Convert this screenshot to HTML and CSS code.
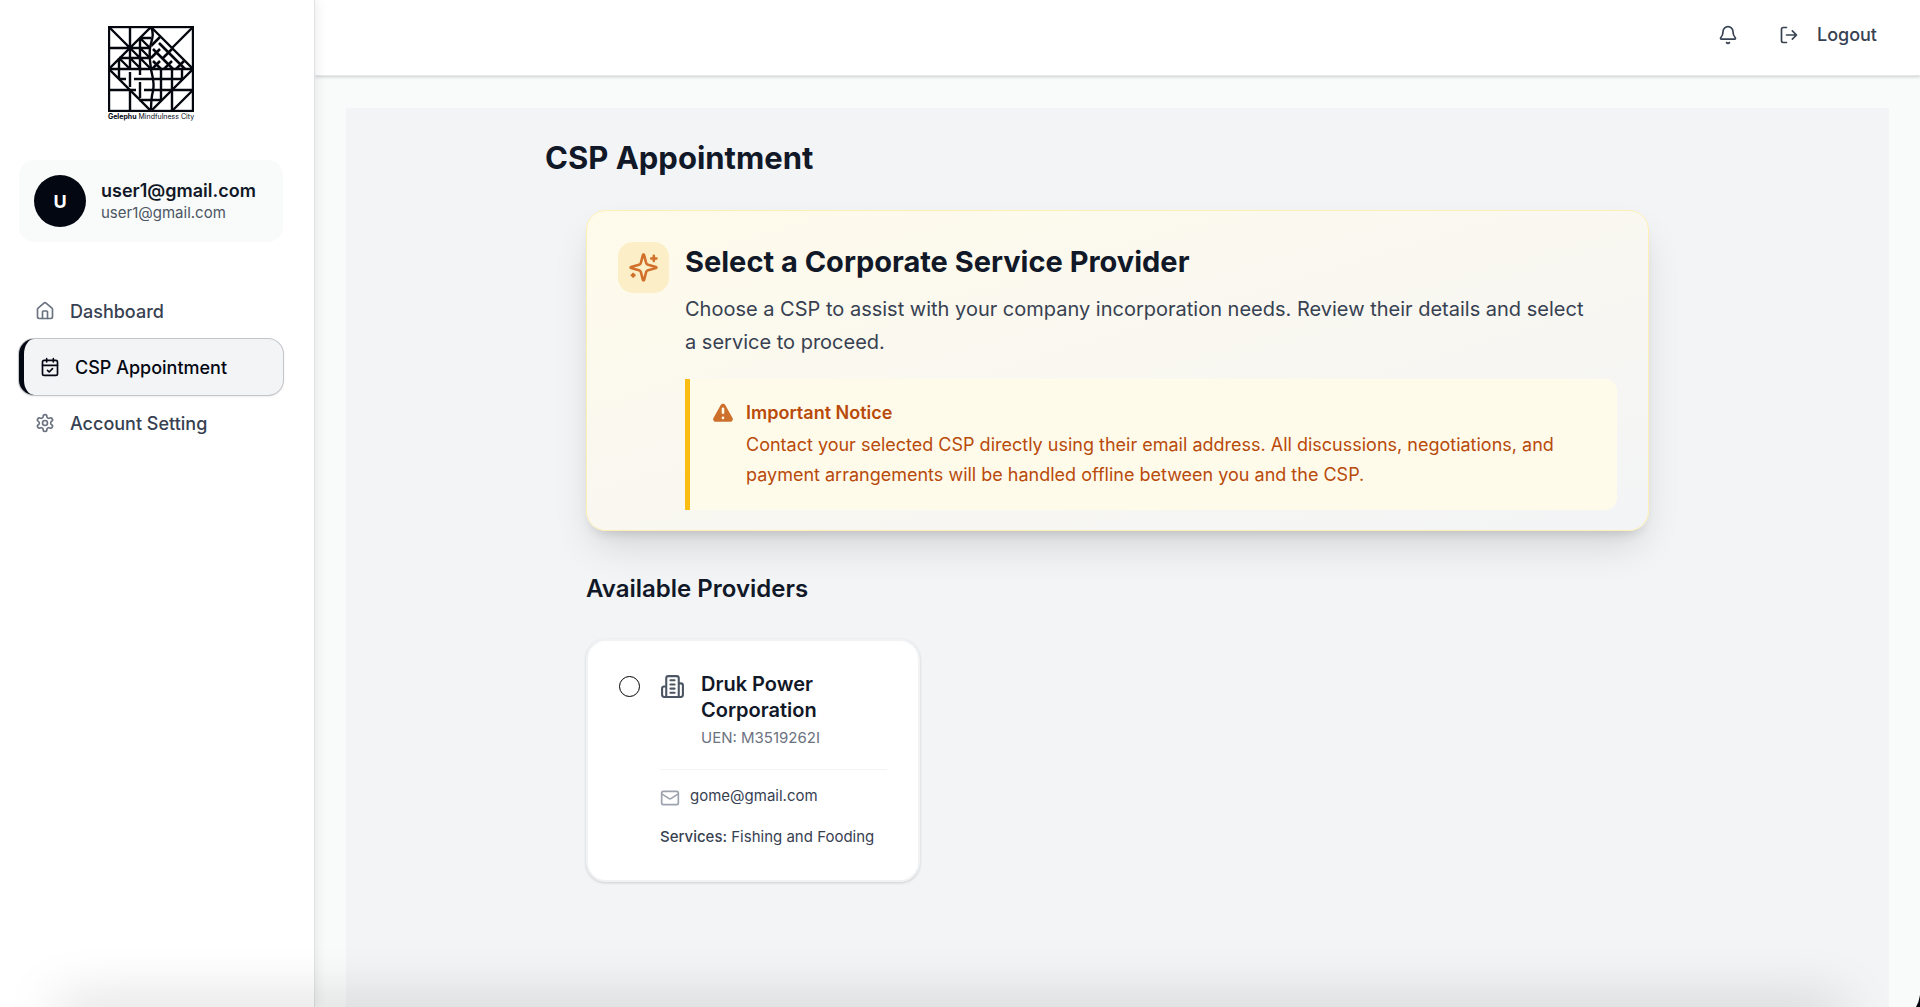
FILE: index.html
```html
<!DOCTYPE html>
<html lang="en">
<head>
  <meta charset="UTF-8" />
  <meta name="viewport" content="width=device-width, initial-scale=1.0">
  <title>CSP Appointment</title>
  <link rel="stylesheet" href="styles.css">
</head>
<body>
  <div class="layout">
    <aside class="sidebar">
      <a href="#" class="logo" aria-label="Gelephu Mindfulness City">
        <svg width="86" height="86" viewBox="0 0 86 86" fill="none" stroke="#05070f" stroke-width="2.4">
          <clipPath id="weave"><path d="M45 4 84 43H43l1-8-3-9 3-8z"/></clipPath>
          <rect x="1" y="1" width="84" height="84"/>
          <path d="M43 1 85 43 43 85 1 43z"/>
          <path d="M1 43h84M22 1v42M22 64v21M1 22h41M1 1l21 21M85 1 64 22M85 64 64 85"/>
          <path d="M22 22l21 21M32 12v31M11 32h32M11 32l11 11M22 32l11 11M32 22l11 11M32 32l11 11M32 12l10 10M32 12h11M11 32v21"/>
          <path d="M1 64h27M36 64h49M11 53h7M26 53h49M22 46v15M32 43v6M32 56v16M53 43v31M64 43v42M74 43v11M31 74h22"/>
          <path d="M43 1c4 8 0 14-1 21-1 8 0 13 1 21 1 7 4 13 2 22-2 7-2 12-2 20"/>
          <g clip-path="url(#weave)" stroke-width="2.6">
            <path d="M43 20l9-9M43 32l9-9M55 32l9-9M43 44l9-9M55 44l9-9M67 44l9-9"/>
            <path d="M51 17l8 8M45 23l8 8M51 29l8 8M63 29l8 8M45 35l8 8M57 23l8 8M57 35l8 8M63 41l6 6M69 35l8 8"/>
          </g>
        </svg>
        <span class="logo-text"><b>Gelephu</b> Mindfulness City</span>
      </a>

      <div class="user-card">
        <div class="avatar">U</div>
        <div class="user-info">
          <div class="user-name">user1@gmail.com</div>
          <div class="user-email">user1@gmail.com</div>
        </div>
      </div>

      <nav class="nav">
        <a href="#" class="nav-link">
          <svg class="icon" viewBox="0 0 24 24"><path d="M15 21v-8a1 1 0 0 0-1-1h-4a1 1 0 0 0-1 1v8"/><path d="M3 10a2 2 0 0 1 .709-1.528l7-6a2 2 0 0 1 2.582 0l7 6A2 2 0 0 1 21 10v9a2 2 0 0 1-2 2H5a2 2 0 0 1-2-2z"/></svg>
          Dashboard
        </a>
        <a href="#" class="nav-link active" aria-current="page">
          <svg class="icon" viewBox="0 0 24 24"><path d="M8 2v4M16 2v4"/><rect x="3" y="4" width="18" height="18" rx="2"/><path d="M3 10h18M9 16l2 2 4-4"/></svg>
          CSP Appointment
        </a>
        <a href="#" class="nav-link">
          <svg class="icon" viewBox="0 0 24 24"><path d="M12.22 2h-.44a2 2 0 0 0-2 2v.18a2 2 0 0 1-1 1.73l-.43.25a2 2 0 0 1-2 0l-.15-.08a2 2 0 0 0-2.73.73l-.22.38a2 2 0 0 0 .73 2.73l.15.1a2 2 0 0 1 1 1.72v.51a2 2 0 0 1-1 1.74l-.15.09a2 2 0 0 0-.73 2.73l.22.38a2 2 0 0 0 2.73.73l.15-.08a2 2 0 0 1 2 0l.43.25a2 2 0 0 1 1 1.73V20a2 2 0 0 0 2 2h.44a2 2 0 0 0 2-2v-.18a2 2 0 0 1 1-1.73l.43-.25a2 2 0 0 1 2 0l.15.08a2 2 0 0 0 2.73-.73l.22-.39a2 2 0 0 0-.73-2.73l-.15-.08a2 2 0 0 1-1-1.74v-.5a2 2 0 0 1 1-1.74l.15-.09a2 2 0 0 0 .73-2.73l-.22-.38a2 2 0 0 0-2.73-.73l-.15.08a2 2 0 0 1-2 0l-.43-.25a2 2 0 0 1-1-1.73V4a2 2 0 0 0-2-2z"/><circle cx="12" cy="12" r="3"/></svg>
          Account Setting
        </a>
      </nav>
    </aside>

    <div class="content">
      <header class="topbar">
        <button class="icon-btn" aria-label="Notifications">
          <svg class="icon" viewBox="0 0 24 24"><path d="M10.268 21a2 2 0 0 0 3.464 0"/><path d="M3.262 15.326A1 1 0 0 0 4 17h16a1 1 0 0 0 .74-1.673C19.41 13.956 18 12.499 18 8A6 6 0 0 0 6 8c0 4.499-1.411 5.956-2.738 7.326"/></svg>
        </button>
        <button class="logout-btn">
          <svg class="icon" viewBox="0 0 24 24"><path d="M9 21H5a2 2 0 0 1-2-2V5a2 2 0 0 1 2-2h4M16 17l5-5-5-5M21 12H9"/></svg>
          Logout
        </button>
      </header>

      <main class="main">
        <div class="panel">
          <div class="page">
            <h1>CSP Appointment</h1>
            <div class="page-body">
              <section class="banner">
                <div class="banner-icon">
                  <svg class="icon" viewBox="0 0 24 24"><path d="M9.937 15.5A2 2 0 0 0 8.5 14.063l-6.135-1.582a.5.5 0 0 1 0-.962L8.5 9.936A2 2 0 0 0 9.937 8.5l1.582-6.135a.5.5 0 0 1 .963 0L14.063 8.5A2 2 0 0 0 15.5 9.937l6.135 1.581a.5.5 0 0 1 0 .964L15.5 14.063a2 2 0 0 0-1.437 1.437l-1.582 6.135a.5.5 0 0 1-.963 0zM20 3v4M22 5h-4M4 17v2M5 18H3"/></svg>
                </div>
                <div class="banner-body">
                  <h2>Select a Corporate Service Provider</h2>
                  <p class="lead">Choose a CSP to assist with your company incorporation needs. Review their details and select a service to proceed.</p>
                  <div class="notice">
                    <svg class="notice-icon" viewBox="0 0 20 20"><path fill-rule="evenodd" d="M8.257 3.099c.765-1.36 2.722-1.36 3.486 0l5.58 9.92c.75 1.334-.213 2.98-1.742 2.98H4.42c-1.53 0-2.493-1.646-1.743-2.98l5.58-9.92zM11 13a1 1 0 11-2 0 1 1 0 012 0zm-1-8a1 1 0 00-1 1v3a1 1 0 002 0V6a1 1 0 00-1-1z" clip-rule="evenodd"/></svg>
                    <div>
                      <h3>Important Notice</h3>
                      <p>Contact your selected CSP directly using their email address. All discussions, negotiations, and payment arrangements will be handled offline between you and the CSP.</p>
                    </div>
                  </div>
                </div>
              </section>

              <h2 class="section-title">Available Providers</h2>
              <div class="providers">
                <div class="provider">
                  <input type="radio" name="provider" id="provider-1">
                  <div class="provider-body">
                    <div class="provider-head">
                      <svg class="icon" viewBox="0 0 24 24"><path d="M6 22V4a2 2 0 0 1 2-2h8a2 2 0 0 1 2 2v18ZM6 12H4a2 2 0 0 0-2 2v6a2 2 0 0 0 2 2h2M18 9h2a2 2 0 0 1 2 2v9a2 2 0 0 1-2 2h-2M10 6h4M10 10h4M10 14h4M10 18h4"/></svg>
                      <div>
                        <label for="provider-1">Druk Power Corporation</label>
                        <p class="uen">UEN: M3519262I</p>
                      </div>
                    </div>
                    <div class="provider-details">
                      <div class="email">
                        <svg class="icon" viewBox="0 0 24 24"><rect x="2" y="4" width="20" height="16" rx="2"/><path d="m22 7-8.97 5.7a1.94 1.94 0 0 1-2.06 0L2 7"/></svg>
                        <span>gome@gmail.com</span>
                      </div>
                      <p><strong>Services:</strong> Fishing and Fooding</p>
                    </div>
                  </div>
                </div>
              </div>
            </div>
          </div>
        </div>
      </main>
    </div>
  </div>
  <div class="bottom-shadow"></div>
  <svg class="corner" width="4" height="12" viewBox="0 0 4 12"><path d="M4 0v12H0Q3 7 4 0z" fill="#05070f"/></svg>
</body>
</html>
```
FILE: styles.css
```css
:root {
  --ink: #111827;
  --dark: #030712;
  --text: #374151;
  --muted: #6b7280;
  --panel: #f3f4f6;
  --page-bg: #f9fbfa;
  --amber: #b84a0a;
}
* {
  box-sizing: border-box;
}
html, body {
  margin: 0;
  padding: 0;
  font-family: 'Inter', sans-serif;
  color: var(--ink);
  background: var(--page-bg);
  min-height: 100vh;
}
h1, h2, h3, p {
  margin: 0;
}
button {
  font-family: inherit;
  background: none;
  border: none;
  padding: 0;
  cursor: pointer;
}
.icon {
  width: 20px;
  height: 20px;
  flex-shrink: 0;
  fill: none;
  stroke: currentColor;
  stroke-width: 2;
  stroke-linecap: round;
  stroke-linejoin: round;
}
.layout {
  display: flex;
  min-height: 100vh;
}

/* Sidebar */
.sidebar {
  width: 315px;
  flex-shrink: 0;
  padding: 26px 31px 0 19px;
  background: #fff;
  border-right: 1px solid #e0e2e6;
  box-shadow: 0 0 12px rgba(17, 24, 39, 0.1);
  z-index: 1;
}
.logo {
  display: flex;
  flex-direction: column;
  align-items: center;
  height: 134px;
  color: var(--dark);
  text-decoration: none;
}
.logo-text {
  font-size: 7px;
  line-height: 10px;
}
.user-card {
  display: flex;
  align-items: center;
  gap: 15px;
  height: 82px;
  padding: 0 15px;
  border-radius: 15px;
  background: var(--page-bg);
}
.avatar {
  display: flex;
  align-items: center;
  justify-content: center;
  width: 52px;
  height: 52px;
  border-radius: 50%;
  background: var(--dark);
  color: #fff;
  font-size: 18px;
  font-weight: 700;
}
.user-info {
  padding-top: 2px;
}
.user-name {
  font-size: 18px;
  line-height: 22px;
  font-weight: 600;
}
.user-email {
  font-size: 15px;
  line-height: 22px;
  color: #4b5563;
}
.nav {
  margin-top: 41px;
}
.nav-link {
  display: flex;
  align-items: center;
  gap: 15px;
  height: 56px;
  padding: 0 16px;
  border-radius: 15px;
  color: var(--text);
  font-size: 18px;
  font-weight: 500;
  text-decoration: none;
}
.nav-link .icon {
  color: var(--muted);
}
.nav-link.active {
  background: var(--panel);
  border-left: 5px solid var(--dark);
  box-shadow: 0 0 0 1px #c3c5c9, 0 1px 3px rgba(0, 0, 0, 0.15);
  color: var(--dark);
}
.nav-link.active .icon {
  color: var(--dark);
}

/* Top bar */
.content {
  flex: 1;
  min-width: 0;
  display: flex;
  flex-direction: column;
}
.topbar {
  display: flex;
  align-items: center;
  justify-content: flex-end;
  gap: 41px;
  height: 76px;
  padding: 0 43px 6px 0;
  background: #fff;
  border-bottom: 1px solid #e5e7eb;
  box-shadow: 0 1px 3px rgba(0, 0, 0, 0.18);
}
.icon-btn, .logout-btn {
  display: flex;
  align-items: center;
  color: var(--text);
}
.logout-btn {
  gap: 18px;
  font-size: 18px;
  font-weight: 500;
}

/* Page */
.main {
  flex: 1;
  display: flex;
  padding: 32px 31px 0;
}
.panel {
  flex: 1;
  padding: 30px 40px;
  background: var(--panel);
}
.page {
  max-width: 1145px;
  margin: 0 auto;
}
h1 {
  font-size: 31px;
  line-height: 40px;
  font-weight: 700;
}
.page-body {
  padding: 32px 41px 0;
}
.banner {
  display: flex;
  gap: 16px;
  padding: 31px 31px 20px;
  border: 1px solid #fef0b4;
  border-radius: 20px;
  background: linear-gradient(to bottom right, #fffbeb, var(--panel));
  box-shadow: 0 20px 40px -8px rgba(0, 0, 0, 0.14), 0 8px 12px -6px rgba(0, 0, 0, 0.14);
}
.banner-icon {
  display: flex;
  align-items: center;
  justify-content: center;
  flex-shrink: 0;
  width: 51px;
  height: 51px;
  border-radius: 15px;
  background: #fcefc7;
  color: #d0702a;
}
.banner-icon .icon {
  width: 31px;
  height: 31px;
}
.banner-body {
  flex: 1;
}
.banner h2 {
  font-size: 29px;
  line-height: 40px;
  font-weight: 700;
}
.lead {
  margin-top: 11px;
  padding-right: 20px;
  font-size: 20px;
  line-height: 33px;
  color: var(--text);
}
.notice {
  display: flex;
  gap: 10px;
  margin-top: 20px;
  padding: 20px;
  border-left: 5px solid #fbbc14;
  border-radius: 0 12px 12px 0;
  background: #fffbeb;
  color: var(--amber);
}
.notice-icon {
  flex-shrink: 0;
  width: 26px;
  height: 26px;
  margin-top: 2px;
  fill: #cc702c;
}
.notice h3 {
  font-size: 18px;
  line-height: 28px;
  font-weight: 600;
}
.notice p {
  margin-top: 3px;
  font-size: 18px;
  line-height: 30px;
}
.section-title {
  margin-top: 40px;
  font-size: 24px;
  line-height: 36px;
  font-weight: 600;
}
.providers {
  display: grid;
  grid-template-columns: repeat(3, 1fr);
  gap: 31px;
  margin-top: 32px;
}
.provider {
  display: flex;
  gap: 20px;
  padding: 30px 31px 32px;
  border: 2px solid #f1f2f4;
  border-radius: 20px;
  background: #fff;
  box-shadow: 0 1px 3px rgba(0, 0, 0, 0.16);
}
.provider input {
  appearance: none;
  flex-shrink: 0;
  width: 21px;
  height: 21px;
  margin: 5px 0 0;
  border: 1px solid #000;
  border-radius: 50%;
}
.provider input:checked {
  border-width: 6px;
}
.provider-body {
  flex: 1;
}
.provider-head {
  display: flex;
  gap: 16px;
  padding-bottom: 20px;
  border-bottom: 1px solid var(--panel);
}
.provider-head .icon {
  width: 25px;
  height: 25px;
  margin-top: 3px;
  color: #4b5563;
}
.provider label {
  display: block;
  font-size: 20px;
  line-height: 26px;
  font-weight: 600;
}
.uen {
  margin-top: 4px;
  font-size: 15px;
  line-height: 22px;
  color: var(--muted);
}
.provider-details {
  padding-top: 15px;
  font-size: 15px;
  line-height: 22px;
  color: var(--text);
}
.provider-details strong {
  font-weight: 500;
}
.email {
  display: flex;
  gap: 10px;
  margin-bottom: 18px;
}
.email .icon {
  margin-top: 3px;
  color: #9ca3af;
}

/* Soft shadow along the bottom of the window */
.bottom-shadow {
  position: fixed;
  left: 60px;
  right: 80px;
  bottom: -20px;
  height: 20px;
  box-shadow: 0 0 56px 2px rgba(0, 0, 0, 0.22);
  pointer-events: none;
  z-index: 2;
}
.corner {
  position: fixed;
  right: 0;
  bottom: 0;
  z-index: 2;
}
```
